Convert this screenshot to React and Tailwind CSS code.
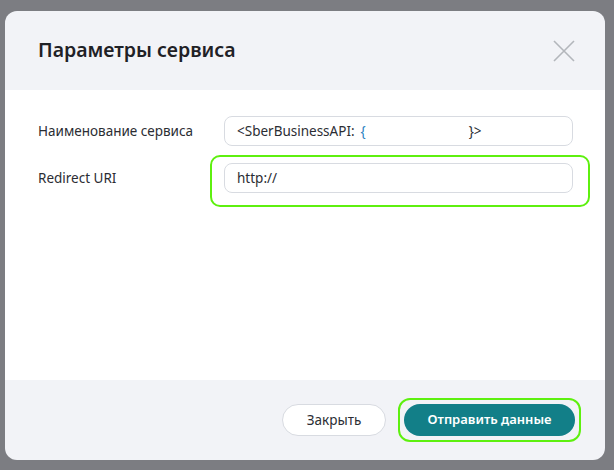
import React from "react";

const font = { fontFamily: '"Noto Sans", "Open Sans", sans-serif' };

const Field = ({ label, children, highlight }) => (
  <div className="flex items-center">
    <div className="w-[186px] text-[13.5px] text-[#2b2d33]">{label}</div>
    <div className="relative">
      {highlight && (
        <div className="absolute -left-[14px] -right-[17px] -top-[8px] -bottom-[14px] rounded-[10px] border-2 border-[#5ef00f]" />
      )}
      <div className="relative w-[349px] h-[30px] rounded-[8px] border border-[#d8dbe1] bg-white flex items-center pl-[12px] text-[13.5px] text-[#2b2d33]">
        {children}
      </div>
    </div>
  </div>
);

export default function App() {
  return (
    <div style={font} className="w-[614px] h-[470px] bg-[#7c7d82] pt-[11px] pl-[5px]">
      <div className="w-[600px] h-[449px] rounded-[12px] overflow-hidden flex flex-col">
        {/* Header */}
        <div className="h-[79px] bg-[#f2f3f7] flex items-center justify-between pl-[33px] pr-[30px]">
          <h2 className="text-[19.5px] font-semibold text-[#1f2126] mt-[-2px]">Параметры сервиса</h2>
          <svg width="22" height="22" viewBox="0 0 22 22" className="text-[#b3b6bb]">
            <path d="M1 1L21 21M21 1L1 21" stroke="currentColor" strokeWidth="1.6" />
          </svg>
        </div>

        {/* Body */}
        <div className="flex-1 bg-white pl-[33px] pt-[26px] flex flex-col gap-[17px]">
          <Field label="Наименование сервиса">
            <span>&lt;SberBusinessAPI:</span>
            <span className="text-[#2a7fc0] ml-[6px]">{"{"}</span>
            <span className="w-[103px]" />
            <span>{"}>"}</span>
          </Field>
          <Field label="Redirect URI" highlight>
            http://
          </Field>
        </div>

        {/* Footer */}
        <div className="h-[80px] bg-[#f2f3f7] flex items-center justify-end gap-[18px] pr-[30px]">
          <button className="w-[104px] h-[32px] rounded-full border border-[#d8dbe1] bg-white text-[13.5px] text-[#2b2d33]">
            Закрыть
          </button>
          <div className="relative">
            <div className="absolute -inset-[6px] rounded-[12px] border-2 border-[#5ef00f]" />
            <button className="relative w-[171px] h-[32px] rounded-full bg-[#127f88] text-white text-[13px] font-semibold">
              Отправить данные
            </button>
          </div>
        </div>
      </div>
    </div>
  );
}
